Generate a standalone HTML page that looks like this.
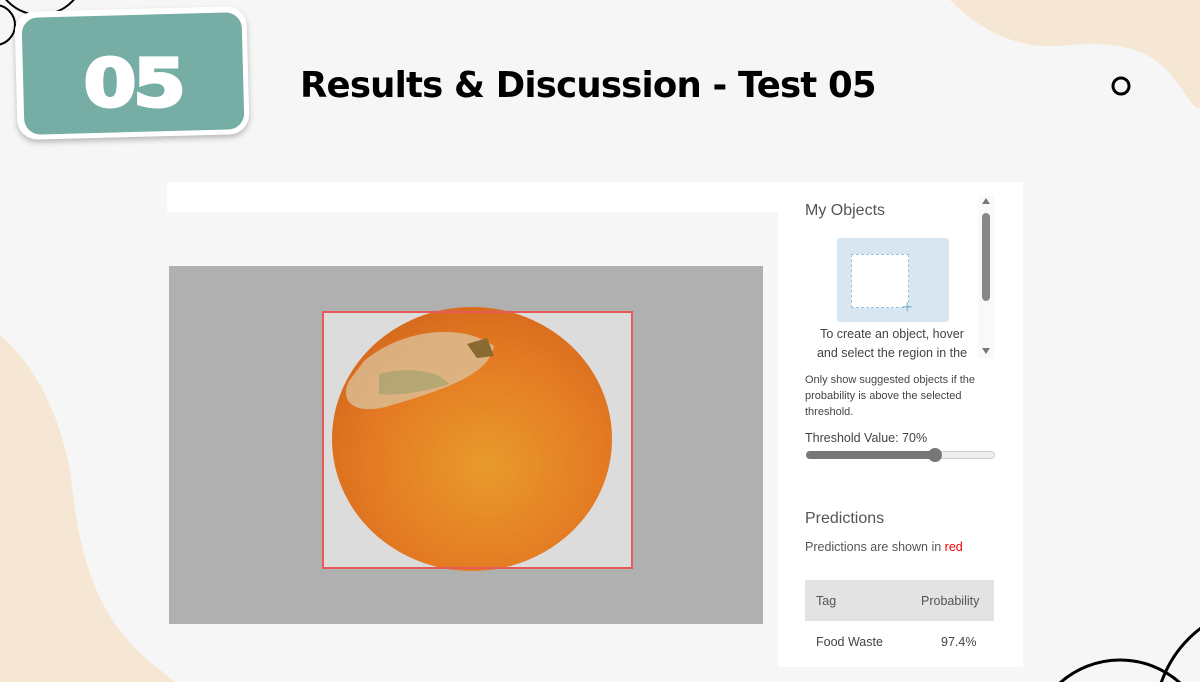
<!DOCTYPE html>
<html><head><meta charset="utf-8"><style>
html,body{margin:0;width:1200px;height:682px;overflow:hidden}
body{background:#f6f6f6;position:relative;font-family:"Liberation Sans",sans-serif}
.abs{position:absolute}
.t{font-family:"Liberation Sans",sans-serif;color:#555}
</style></head><body>
<svg class="abs" style="left:0;top:0" width="1200" height="682">
<path d="M950 0 C985 35 1020 48 1060 46 C1110 40 1150 45 1175 80 C1190 100 1195 110 1200 108 L1200 0Z" fill="#f6e6d4"/>
<path d="M0 335 C40 370 60 420 70 470 C80 560 95 620 160 670 L175 682 L0 682Z" fill="#f6e6d4"/>
<circle cx="1121" cy="86" r="8" fill="none" stroke="#000" stroke-width="3"/>
<circle cx="1120" cy="750" r="90" fill="none" stroke="#000" stroke-width="3"/>
<circle cx="1270" cy="720" r="115" fill="none" stroke="#000" stroke-width="3"/>
<circle cx="-5" cy="25" r="20" fill="none" stroke="#000" stroke-width="2"/>
<circle cx="40" cy="-30" r="45" fill="none" stroke="#000" stroke-width="2"/>
</svg>
<div class="abs" style="left:16px;top:9px;width:232px;height:128px;background:#fff;border-radius:20px;transform:rotate(-1.5deg);box-shadow:0 3px 6px rgba(0,0,0,.25)"></div>
<div class="abs" style="left:23px;top:15px;width:220px;height:117px;background:#76ada4;border-radius:16px;transform:rotate(-1.5deg)"></div>
<div class="abs" style="left:23px;top:44px;width:220px;text-align:center;font:900 66px/80px 'DejaVu Sans',sans-serif;color:#fff;letter-spacing:-3px;transform:scaleX(1.15);-webkit-text-stroke:3px #fff">05</div>
<div class="abs" style="left:300px;top:62px;font:bold 35.5px/48px 'DejaVu Sans',sans-serif;color:#000;letter-spacing:-0.8px;white-space:nowrap">Results &amp; Discussion - Test 05</div>

<div class="abs" style="left:167px;top:182px;width:856px;height:485px;background:#fff"></div>
<div class="abs" style="left:167px;top:212px;width:611px;height:455px;background:#f7f7f7"></div>
<div class="abs" style="left:169px;top:266px;width:594px;height:358px;background:#b0b0b0"></div>
<div class="abs" style="left:323px;top:312px;width:309px;height:256px;background:#dcdcdc"></div>
<svg class="abs" style="left:169px;top:266px" width="594" height="358">
<defs><radialGradient id="g" cx="0.55" cy="0.6" r="0.6"><stop offset="0" stop-color="#e89a2c"/><stop offset="0.7" stop-color="#e47a22"/><stop offset="1" stop-color="#d86c1e"/></radialGradient></defs>
<ellipse cx="303" cy="173" rx="140" ry="132" fill="url(#g)"/>
<path d="M195 95 C230 65 290 55 325 80 C320 110 270 125 220 140 C185 150 170 135 180 115Z" fill="#dcc4a0" opacity="0.75"/>
<path d="M210 108 C240 100 270 105 280 118 C260 125 230 130 210 128Z" fill="#9aa06a" opacity="0.6"/>
<path d="M298 78 L318 72 L325 90 L308 92Z" fill="#8a6a30"/>
<rect x="154" y="46" width="309" height="256" fill="none" stroke="#e85a5a" stroke-width="2"/>
</svg>

<div class="abs t" style="left:805px;top:202px;font-size:16px;color:#555">My Objects</div>
<div class="abs" style="left:978px;top:196px;width:16px;height:162px;background:#f9f9f9"></div>
<div class="abs" style="left:982px;top:198px;width:0;height:0;border:4px solid transparent;border-bottom:6px solid #777;border-top:0"></div>
<div class="abs" style="left:982px;top:213px;width:8px;height:88px;background:#888;border-radius:4px"></div>
<div class="abs" style="left:982px;top:348px;width:0;height:0;border:4px solid transparent;border-top:6px solid #777;border-bottom:0"></div>
<div class="abs" style="left:837px;top:238px;width:112px;height:84px;background:#d7e6f1;border-radius:3px"></div>
<div class="abs" style="left:851px;top:254px;width:56px;height:52px;background:#fff;border:1px dashed #9cc2dc"></div>
<div class="abs" style="left:902px;top:300px;color:#8bb8d6;font-size:18px;line-height:14px">+</div>
<div class="abs t" style="left:810px;top:325px;width:164px;text-align:center;font-size:12.5px;line-height:19px;color:#444">To create an object, hover and select the region in the</div>
<div class="abs t" style="left:805px;top:372px;width:190px;font-size:11px;line-height:16px;color:#444">Only show suggested objects if the probability is above the selected threshold.</div>
<div class="abs t" style="left:805px;top:431px;font-size:12.5px;color:#444">Threshold Value: 70%</div>
<div class="abs" style="left:806px;top:451px;width:187px;height:6px;border:1px solid #ccc;border-radius:4px;background:#eee"></div>
<div class="abs" style="left:806px;top:451px;width:130px;height:8px;border-radius:4px;background:#777"></div>
<div class="abs" style="left:928px;top:448px;width:14px;height:14px;border-radius:50%;background:#777"></div>
<div class="abs t" style="left:805px;top:510px;font-size:16px;color:#555">Predictions</div>
<div class="abs t" style="left:805px;top:540px;font-size:12.5px;color:#555">Predictions are shown in <span style="color:#e00">red</span></div>
<div class="abs" style="left:805px;top:580px;width:189px;height:41px;background:#e3e3e3"></div>
<div class="abs t" style="left:816px;top:594px;font-size:12.5px">Tag</div>
<div class="abs t" style="left:921px;top:594px;font-size:12.5px">Probability</div>
<div class="abs t" style="left:816px;top:635px;font-size:12.5px;color:#444">Food Waste</div>
<div class="abs t" style="left:941px;top:635px;font-size:12.5px;color:#444">97.4%</div>
</body></html>
